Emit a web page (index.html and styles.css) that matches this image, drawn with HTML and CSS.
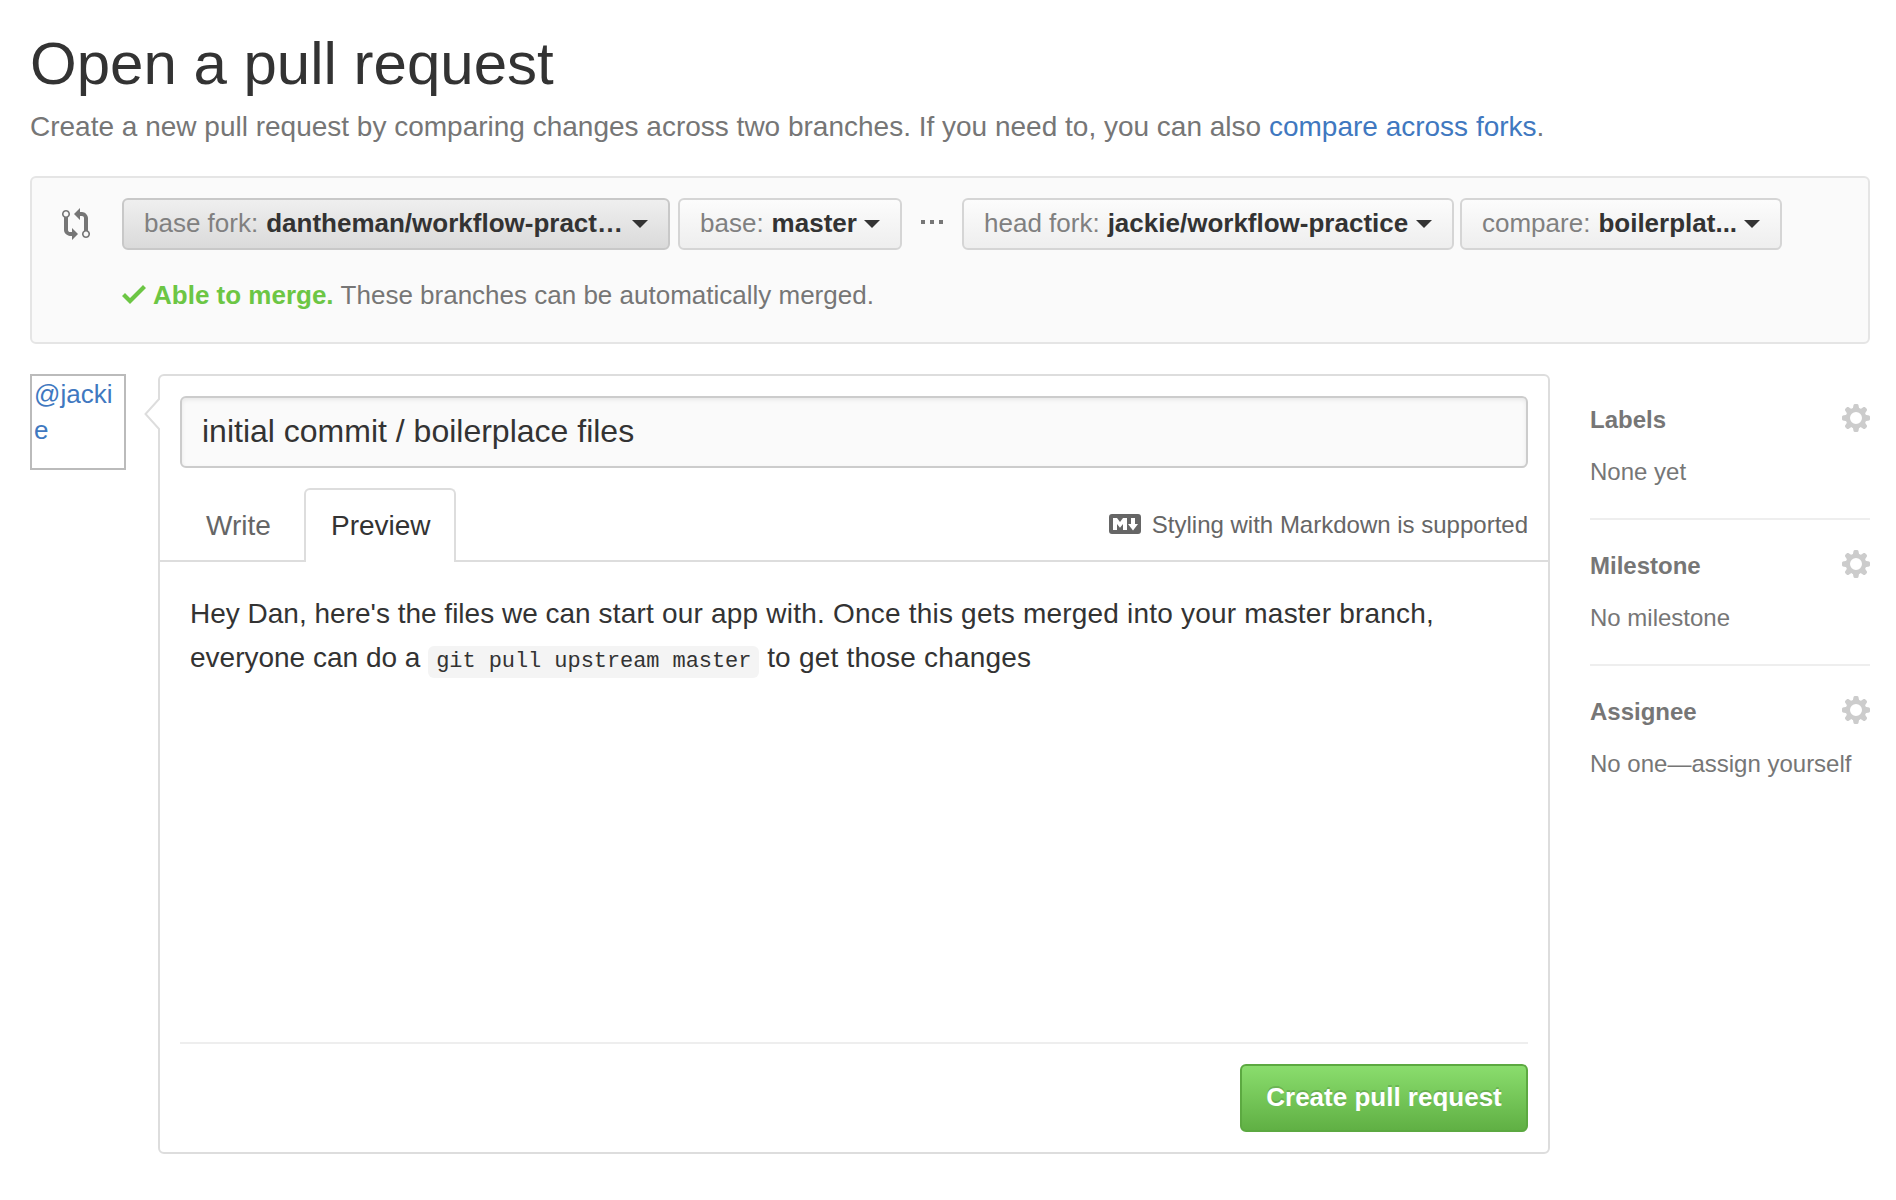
FILE: index.html
```html
<!DOCTYPE html>
<html lang="en">
<head>
<meta charset="utf-8">
<title>Open a pull request</title>
<link rel="stylesheet" href="styles.css">
</head>
<body>
<svg class="defs" width="0" height="0">
  <symbol id="gear" viewBox="0 0 28 28">
    <circle cx="14" cy="14" r="8.200" fill="none" stroke="#ccc" stroke-width="4.400"/>
    <path id="teeth" d="M12.600 0h2.800l1 .8.800 4h-6.400l.8-4zM12.600 28h2.800l1-.8.800-4h-6.400l.8 4zM0 12.600v2.800l.8 1 4 .8v-6.400l-4 .8zM28 12.600v2.800l-.8 1-4 .8v-6.400l4 .8z"/>
    <use href="#teeth" transform="rotate(45 14 14)"/>
  </symbol>
</svg>
<main class="page">
  <header class="page-head">
    <h1 class="title">Open a pull request</h1>
    <p class="subtitle">Create a new pull request by comparing changes across two branches. If you need to, you can also <a href="#">compare across forks</a>.</p>
  </header>

  <section class="range">
    <svg class="icon-compare" width="28" height="32" viewBox="0 0 14 16"><path d="M5 12H4c-.27-.02-.48-.11-.69-.31-.21-.2-.3-.42-.31-.69V4.720A1.993 1.993 0 0 0 2 1a1.993 1.993 0 0 0-1 3.720V11c.03.78.34 1.470.94 2.060.6.590 1.280.910 2.060.940h1v2l3-3-3-3v2zM2 1.800c.66 0 1.200.55 1.200 1.200 0 .65-.55 1.200-1.200 1.200C1.350 4.200.8 3.650.8 3c0-.65.55-1.200 1.200-1.200zm11 9.480V5c-.03-.78-.34-1.470-.94-2.060-.6-.59-1.280-.91-2.060-.94H9V0L6 3l3 3V4h1c.27.02.48.11.69.31.21.2.3.42.31.69v6.280A1.993 1.993 0 0 0 12 15a1.993 1.993 0 0 0 1-3.720zm-1 2.920c-.66 0-1.200-.55-1.200-1.200 0-.65.55-1.200 1.200-1.200.65 0 1.200.55 1.200 1.200 0 .65-.55 1.200-1.200 1.200z"/></svg>
    <div class="range-body">
      <div class="range-row">
        <button class="select is-active base-fork"><i>base fork:</i> <b>dantheman/workflow-pract…</b></button>
        <button class="select base"><i>base:</i> <b>master</b></button>
        <span class="dots"><span></span><span></span><span></span></span>
        <button class="select head-fork"><i>head fork:</i> <b>jackie/workflow-practice</b></button>
        <button class="select compare"><i>compare:</i> <b>boilerplat...</b></button>
      </div>
      <p class="merge"><svg width="24" height="32" viewBox="0 0 12 16"><path d="M12 5l-8 8-4-4 1.500-1.500L4 10l6.500-6.500z"/></svg><strong>Able to merge.</strong> <span>These branches can be automatically merged.</span></p>
    </div>
  </section>

  <div class="columns">
    <a class="avatar" href="#">@jackie</a>
    <section class="composer">
      <svg class="pointer" width="16" height="34" viewBox="0 0 16 34"><path d="M16 1L1.500 17 16 33" fill="#fff" stroke="#ddd" stroke-width="2"/></svg>
      <div class="title-field">initial commit / boilerplace files</div>
      <nav class="tabs">
        <a class="tab write">Write</a>
        <a class="tab preview">Preview</a>
        <span class="markdown"><svg width="32" height="20" viewBox="0 0 32 20"><path fill-rule="evenodd" d="M3 0h26a3 3 0 0 1 3 3v14a3 3 0 0 1-3 3H3a3 3 0 0 1-3-3V3a3 3 0 0 1 3-3zM4 4v12h4v-6l3 3.800L14 10v6h4V4h-4l-3 4-3-4zM22 4v6h-3l5 6.500 5-6.500h-3V4z"/></svg><span>Styling with Markdown is supported</span></span>
      </nav>
      <div class="comment">Hey Dan, here's the files we can <span class="loose">start our app with. Once this gets merged into your master branch,</span><br>everyone can do a <code>git pull upstream master</code> <span class="loose">to get those changes</span></div>
      <div class="actions"><button class="create">Create pull request</button></div>
    </section>
    <aside class="sidebar">
      <section class="item"><div class="item-head"><h2>Labels</h2><svg width="28" height="28"><use href="#gear"/></svg></div><p>None yet</p></section>
      <section class="item"><div class="item-head"><h2>Milestone</h2><svg width="28" height="28"><use href="#gear"/></svg></div><p>No milestone</p></section>
      <section class="item"><div class="item-head"><h2>Assignee</h2><svg width="28" height="28"><use href="#gear"/></svg></div><p>No one—assign yourself</p></section>
    </aside>
  </div>
</main>
</body>
</html>
```
FILE: styles.css
```css
* { box-sizing: border-box; }
body { margin: 0; background: #fff; color: #333; font-family: "Liberation Sans", Arial, sans-serif; font-size: 28px; }
h1, h2, p { margin: 0; }
a { color: #4078c0; text-decoration: none; }
button { font-family: inherit; margin: 0; }
.defs { position: absolute; }
.page { width: 1896px; padding: 31px 26px 0 30px; }
.title { font-size: 60px; line-height: 66px; font-weight: 400; white-space: nowrap; }
.subtitle { margin: 13px 0 32px; color: #767676; line-height: 34px; white-space: nowrap; }

.range { display: flex; align-items: flex-start; height: 168px; padding: 20px 0 0 30px; background: #fafafa; border: 2px solid #e5e5e5; border-radius: 6px; }
.icon-compare { flex: none; margin: 10px 32px 0 0; fill: #767676; }
.range-row { display: flex; }
.select { display: flex; align-items: center; height: 52px; padding: 0 20px 2px; border: 2px solid #d5d5d5; border-radius: 6px; background: linear-gradient(#fcfcfc, #eee); color: #333; font-size: 26px; line-height: 46px; white-space: pre; }
.select i { font-style: normal; color: #808080; margin-right: 8px; }
.select::after { content: ""; margin: 2px 0 0 auto; border: 8px solid transparent; border-top-color: #333; border-bottom: 0; }
.select.is-active { background: linear-gradient(#efefef, #dadada); border-color: #c8c8c8; }
.base-fork { width: 548px; margin-right: 8px; }
.base { width: 224px; }
.head-fork { width: 492px; margin-right: 6px; }
.compare { width: 322px; }
.dots { display: flex; gap: 5px; width: 60px; padding: 22px 0 0 19px; }
.dots span { width: 4px; height: 4px; background: #767676; }
.merge { display: flex; align-items: flex-start; margin-top: 28px; color: #767676; font-size: 26px; line-height: 34px; white-space: nowrap; }
.merge svg { margin-right: 7px; fill: #6cc644; }
.merge strong { color: #6cc644; margin-right: 7px; }

.columns { display: flex; align-items: flex-start; margin-top: 30px; }
.avatar { flex: none; width: 96px; height: 96px; padding: 0 3px 0 2px; border: 2px solid #bbb; font-size: 26px; line-height: 36px; overflow-wrap: anywhere; }
.composer { position: relative; flex: none; width: 1392px; height: 780px; margin-left: 32px; border: 2px solid #ddd; border-radius: 6px; display: flex; flex-direction: column; }
.pointer { position: absolute; left: -16px; top: 21px; }
.title-field { height: 72px; margin: 20px 20px 0; padding: 0 20px; border: 2px solid #ccc; border-radius: 6px; background: #fafafa; box-shadow: inset 0 2px 4px rgba(0,0,0,.075); font-size: 32px; line-height: 66px; white-space: nowrap; }
.tabs { display: flex; height: 74px; margin-top: 20px; padding: 0 20px 0 46px; box-shadow: inset 0 -2px #ddd; }
.tab { line-height: 76px; }
.write { width: 98px; color: #666; }
.preview { width: 152px; padding-left: 25px; color: #333; background: #fff; border: 2px solid #ddd; border-bottom: 0; border-radius: 6px 6px 0 0; line-height: 72px; }
.markdown { display: flex; margin-left: auto; color: #666; font-size: 24px; line-height: 74px; white-space: nowrap; }
.markdown svg { margin: 26px 11px 0 0; fill: #666; }
.comment { flex: 1; padding: 30px 30px 0; line-height: 44px; white-space: nowrap; }
.loose { letter-spacing: .21px; }
code { padding: 3px 8px 4px; background: #f4f4f4; border-radius: 6px; font: 22px "Liberation Mono", monospace; letter-spacing: -.07px; }
.actions { display: flex; justify-content: flex-end; height: 110px; margin: 0 20px; padding-top: 20px; border-top: 2px solid #eee; }
.create { width: 288px; height: 68px; padding: 0 0 2px; border: 2px solid #5ca941; border-radius: 6px; background: linear-gradient(#8add6d, #60b044); color: #fff; font-size: 26px; font-weight: 700; text-shadow: 0 -2px rgba(0,0,0,.15); white-space: nowrap; }

.sidebar { width: 280px; margin-left: 40px; padding-top: 30px; color: #767676; font-size: 24px; }
.item { height: 116px; border-bottom: 2px solid #eee; margin-bottom: 30px; }
.item:last-child { border: 0; }
.item-head { display: flex; justify-content: space-between; height: 52px; }
.item-head svg { fill: #ccc; }
.item h2 { font-size: 24px; line-height: 32px; }
.item p { line-height: 32px; white-space: nowrap; }
```
